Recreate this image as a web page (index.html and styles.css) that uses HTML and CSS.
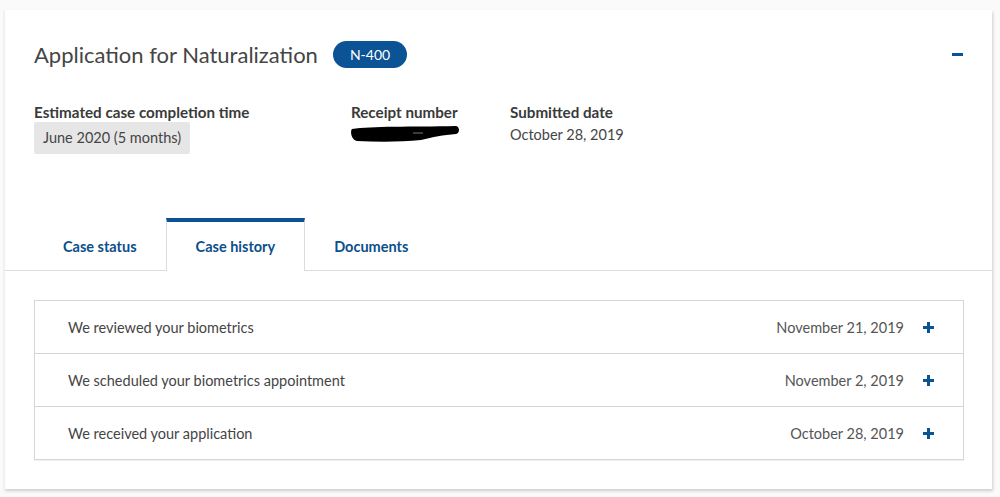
FILE: index.html
```html
<!DOCTYPE html>
<html lang="en">
<head>
    <meta charset="UTF-8">
    <title>Application for Naturalization</title>
    <link rel="stylesheet" href="styles.css">
</head>
<body>
    <div class="card">
        <div class="card-head">
            <h1>Application for Naturalization</h1>
            <span class="badge">N-400</span>
            <span class="collapse"></span>
        </div>
        <div class="facts">
            <div class="fact fact-time">
                <h3>Estimated case completion time</h3>
                <span class="time-box">June 2020 (5 months)</span>
            </div>
            <div class="fact fact-receipt">
                <h3>Receipt number</h3>
                <svg class="redacted" width="110" height="18" viewBox="0 0 110 18">
                    <path d="M1 4 C20 1 60 2 105 1 C109 2 109 8 105 9 C92 10 82 12 70 15 C50 17 28 17 6 16 C0 15 -1 6 1 4 Z" fill="#000"/>
                    <path d="M62 8 L72 8" stroke="#777" stroke-width="1"/>
                </svg>
            </div>
            <div class="fact">
                <h3>Submitted date</h3>
                <p>October 28, 2019</p>
            </div>
        </div>
        <nav class="tabs">
            <a class="tab">Case status</a>
            <a class="tab active">Case history</a>
            <a class="tab">Documents</a>
        </nav>
        <div class="panel">
            <ul class="history">
                <li><span class="event">We reviewed your biometrics</span><span class="date">November 21, 2019</span><span class="plus"></span></li>
                <li><span class="event">We scheduled your biometrics appointment</span><span class="date">November 2, 2019</span><span class="plus"></span></li>
                <li><span class="event">We received your application</span><span class="date">October 28, 2019</span><span class="plus"></span></li>
            </ul>
        </div>
    </div>
</body>
</html>
```

FILE: styles.css
```css
body {
    margin: 0;
    padding: 10px 8px 8px 4px;
    background-color: #fafafa;
    font-family: Lato, "Open Sans", sans-serif;
    color: #454545;
}
.card {
    background: white;
    box-shadow: 1px 2px 3px rgba(0, 0, 0, 0.18);
    border-left: 1px solid #eee;
    height: 479px;
    box-sizing: border-box;
}
.card-head {
    display: flex;
    align-items: center;
    padding: 30px 29px 0 29px;
    height: 28px;
}
h1 {
    margin: 0;
    font-size: 22px;
    font-weight: normal;
    color: #454545;
}
.badge {
    margin-left: 15px;
    background: #0b5394;
    color: white;
    border-radius: 14px;
    font-size: 14px;
    padding: 5px 17px;
    line-height: 17px;
}
.collapse {
    margin-left: auto;
    width: 11px;
    height: 3px;
    background: #0b5394;
    margin-right: 0;
}
.facts {
    display: flex;
    padding: 35px 29px 0 29px;
}
.fact h3 {
    margin: 0;
    font-size: 15.2px;
    font-weight: bold;
    color: #3a3a3a;
    line-height: 18px;
}
.fact p {
    margin: 4px 0 0;
    font-size: 14.5px;
    line-height: 20px;
}
.fact-time {
    width: 317px;
}
.fact-receipt {
    width: 159px;
}
.time-box {
    display: inline-block;
    margin-top: 1px;
    background: #e6e6e6;
    padding: 6px 9px;
    font-size: 14.5px;
    line-height: 20px;
    border-radius: 2px;
}
.redacted {
    display: block;
    margin-top: 4px;
}
.tabs {
    display: flex;
    margin-top: 64px;
    padding-left: 29px;
    border-bottom: 1px solid #dcdcdc;
    height: 52px;
}
.tab {
    display: flex;
    align-items: center;
    justify-content: center;
    font-size: 14.5px;
    font-weight: bold;
    color: #0b4f8c;
    border-top: 4px solid transparent;
    border-left: 1px solid transparent;
    border-right: 1px solid transparent;
    height: 48px;
    padding: 0 28px;
}
.tab.active {
    border-top-color: #0b5394;
    border-left-color: #dcdcdc;
    border-right-color: #dcdcdc;
    background: white;
    margin-bottom: -1px;
    height: 49px;
    padding: 0 29px;
}
.panel {
    padding: 29px 28px 0 29px;
}
.history {
    list-style: none;
    margin: 0;
    padding: 0;
    border: 1px solid #d6d6d6;
    box-shadow: 0 1px 1px rgba(0, 0, 0, 0.06);
}
.history li {
    display: flex;
    align-items: center;
    height: 52px;
    padding: 0 29px 0 33px;
    border-top: 1px solid #d6d6d6;
    font-size: 14.5px;
}
.history li:first-child {
    border-top: none;
}
.event {
    flex: 1;
}
.date {
    color: #555;
}
.plus {
    position: relative;
    width: 11px;
    height: 11px;
    margin-left: 19px;
}
.plus::before,
.plus::after {
    content: "";
    position: absolute;
    background: #0b5394;
}
.plus::before {
    left: 0;
    top: 4px;
    width: 11px;
    height: 3px;
}
.plus::after {
    left: 4px;
    top: 0;
    width: 3px;
    height: 11px;
}
```
